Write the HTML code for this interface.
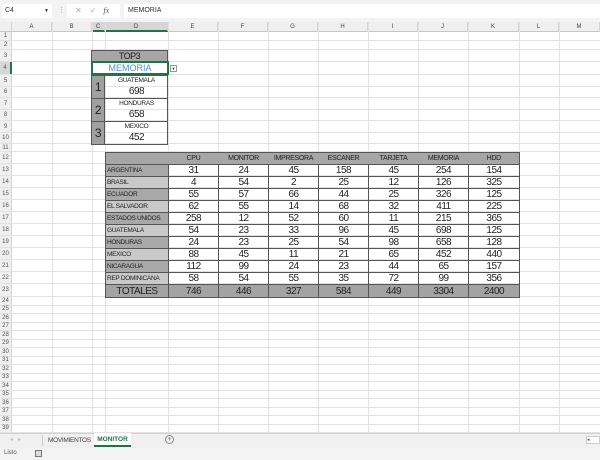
<!DOCTYPE html>
<html><head><meta charset="utf-8"><style>
*{margin:0;padding:0;box-sizing:border-box}
body{width:600px;height:460px;overflow:hidden;background:#fff;font-family:"Liberation Sans",Arial,sans-serif;position:relative}
.a{position:absolute}
.r{position:absolute;left:0;width:600px;border-bottom:1px solid #e2e2e2}
.r span{position:absolute;left:0;top:0;bottom:0;width:12px;background:#efefef;border-right:1px solid #d4d4d4;font-size:6px;color:#555;display:flex;align-items:center;justify-content:center}
.v{position:absolute;top:22px;height:411px;width:1px;background:#e2e2e2}
.ch{position:absolute;top:22px;height:10px;background:#efefef;border-right:1px solid #d4d4d4;border-bottom:1px solid #c6c6c6;font-size:6px;color:#444;text-align:center;line-height:10px}
.n{font-family:"Liberation Sans Narrow","Liberation Sans",sans-serif;letter-spacing:-0.5px}
table{border-collapse:collapse;position:absolute;table-layout:fixed}
td{padding:0;text-align:center;overflow:hidden;white-space:nowrap}
#dt td{height:12px;border:1px solid #555;font-size:10px;line-height:11px;font-family:"Liberation Sans Narrow","Liberation Sans",sans-serif;letter-spacing:-0.5px;color:#222}
#dt td.l{text-align:left;font-size:6.5px;padding-left:1px;color:#222;letter-spacing:-0.3px}
#dt tr.h td{background:#a6a6a6;font-size:7px;letter-spacing:-0.3px;border-left:none;border-right:none}
#dt td.d{background:#a8a8a8}
#dt td.e{background:#c9c9c9}
#dt tr.t td{background:#a3a3a3;font-size:10px}
</style></head><body>
<div class="a" style="left:0;top:0;width:600px;height:22px;background:#f3f3f3"></div>
<div class="a" style="left:2px;top:4px;width:50px;height:14px;background:#fff;font-size:7px;line-height:14px;padding-left:3px;color:#333">C4<span style="position:absolute;right:3px;font-size:5px">▼</span></div>
<div class="a" style="left:58px;top:6px;font-size:7px;color:#aaa">⋮</div>
<div class="a" style="left:67px;top:4px;width:53px;height:14px;background:#fff;font-size:8px;line-height:14px;color:#aaa"><span style="margin-left:8px">✕</span><span style="margin-left:8px">✓</span><i style="margin-left:7px;color:#555;font-family:'Liberation Serif',serif">fx</i></div>
<div class="a" style="left:124px;top:4px;width:476px;height:14px;background:#fff;font-size:7px;line-height:14px;padding-left:4px;color:#333">MEMORIA</div>
<div class="ch" style="left:0;width:12px"></div>
<div class="ch" style="left:12px;width:40px">A</div>
<div class="ch" style="left:52px;width:40px">B</div>
<div class="ch" style="left:92px;width:13px;background:#d6d6d6;border-bottom:2px solid #217346">C</div>
<div class="ch" style="left:105px;width:63px;background:#d6d6d6;border-bottom:2px solid #217346">D</div>
<div class="ch" style="left:168px;width:50px">E</div>
<div class="ch" style="left:218px;width:50px">F</div>
<div class="ch" style="left:268px;width:50px">G</div>
<div class="ch" style="left:318px;width:50px">H</div>
<div class="ch" style="left:368px;width:50px">I</div>
<div class="ch" style="left:418px;width:50px">J</div>
<div class="ch" style="left:468px;width:51px">K</div>
<div class="ch" style="left:519px;width:40px">L</div>
<div class="ch" style="left:559px;width:41px">M</div>
<div class="v" style="left:52px"></div><div class="v" style="left:92px"></div><div class="v" style="left:105px"></div><div class="v" style="left:168px"></div><div class="v" style="left:218px"></div><div class="v" style="left:268px"></div><div class="v" style="left:318px"></div><div class="v" style="left:368px"></div><div class="v" style="left:418px"></div><div class="v" style="left:468px"></div><div class="v" style="left:519px"></div><div class="v" style="left:559px"></div>
<div class="r" style="top:32px;height:9px"><span>1</span></div>
<div class="r" style="top:41px;height:9px"><span>2</span></div>
<div class="r" style="top:50px;height:12px"><span>3</span></div>
<div class="r" style="top:62px;height:13px"><span style="background:#d6d6d6;border-right:2px solid #217346">4</span></div>
<div class="r" style="top:75px;height:12px"><span>5</span></div>
<div class="r" style="top:87px;height:11px"><span>6</span></div>
<div class="r" style="top:98px;height:12px"><span>7</span></div>
<div class="r" style="top:110px;height:11px"><span>8</span></div>
<div class="r" style="top:121px;height:12px"><span>9</span></div>
<div class="r" style="top:133px;height:11px"><span>10</span></div>
<div class="r" style="top:144px;height:8px"><span>11</span></div>
<div class="r" style="top:152px;height:12px"><span>12</span></div>
<div class="r" style="top:164px;height:12px"><span>13</span></div>
<div class="r" style="top:176px;height:12px"><span>14</span></div>
<div class="r" style="top:188px;height:12px"><span>15</span></div>
<div class="r" style="top:200px;height:12px"><span>16</span></div>
<div class="r" style="top:212px;height:12px"><span>17</span></div>
<div class="r" style="top:224px;height:12px"><span>18</span></div>
<div class="r" style="top:236px;height:12px"><span>19</span></div>
<div class="r" style="top:248px;height:12px"><span>20</span></div>
<div class="r" style="top:260px;height:12px"><span>21</span></div>
<div class="r" style="top:272px;height:12px"><span>22</span></div>
<div class="r" style="top:284px;height:13px"><span>23</span></div>
<div class="r" style="top:297px;height:8.5px"><span>24</span></div>
<div class="r" style="top:305.5px;height:8.5px"><span>25</span></div>
<div class="r" style="top:314px;height:8.5px"><span>26</span></div>
<div class="r" style="top:322.5px;height:8.5px"><span>27</span></div>
<div class="r" style="top:331px;height:8.5px"><span>28</span></div>
<div class="r" style="top:339.5px;height:8.5px"><span>29</span></div>
<div class="r" style="top:348px;height:8.5px"><span>30</span></div>
<div class="r" style="top:356.5px;height:8.5px"><span>31</span></div>
<div class="r" style="top:365px;height:8.5px"><span>32</span></div>
<div class="r" style="top:373.5px;height:8.5px"><span>33</span></div>
<div class="r" style="top:382px;height:8.5px"><span>34</span></div>
<div class="r" style="top:390.5px;height:8.5px"><span>35</span></div>
<div class="r" style="top:399px;height:8.5px"><span>36</span></div>
<div class="r" style="top:407.5px;height:8.5px"><span>37</span></div>
<div class="r" style="top:416px;height:8.5px"><span>38</span></div>
<div class="r" style="top:424.5px;height:8.5px"><span>39</span></div>

<div class="a n" style="left:91px;top:50px;width:77px;height:12px;background:#a6a6a6;border:1px solid #555;font-size:9px;text-align:center;line-height:11px;color:#222">TOP3</div>
<div class="a" style="left:91px;top:61px;width:78px;height:14px;background:#fff;border:2px solid #217346;font-size:9px;text-align:center;line-height:10px;color:#4f8fcf">MEMORIA</div>
<div class="a" style="left:170px;top:65px;width:7px;height:7px;border:1px solid #999;background:#fff;font-size:4px;line-height:6px;text-align:center;color:#333">▼</div>
<div class="a" style="left:91px;top:75px;width:14px;height:70px;border:1px solid #555;background:#a0a0a0"></div>
<div class="a" style="left:91px;top:75px;width:77px;height:70px;border:1px solid #555"></div>
<div class="a" style="left:91px;top:98px;width:77px;height:1px;background:#555"></div>
<div class="a" style="left:91px;top:121px;width:77px;height:1px;background:#555"></div>
<div class="a" style="left:104px;top:75px;width:1px;height:70px;background:#555"></div>
<div class="a n" style="left:91px;top:80px;width:14px;font-size:12px;text-align:center;color:#222">1</div>
<div class="a n" style="left:91px;top:103px;width:14px;font-size:12px;text-align:center;color:#222">2</div>
<div class="a n" style="left:91px;top:126px;width:14px;font-size:12px;text-align:center;color:#222">3</div>
<div class="a" style="left:105px;top:77px;width:63px;font-size:6.5px;letter-spacing:-0.3px;text-align:center;color:#222">GUATEMALA</div>
<div class="a n" style="left:105px;top:86px;width:63px;font-size:10px;text-align:center;color:#222">698</div>
<div class="a" style="left:105px;top:100px;width:63px;font-size:6.5px;letter-spacing:-0.3px;text-align:center;color:#222">HONDURAS</div>
<div class="a n" style="left:105px;top:109px;width:63px;font-size:10px;text-align:center;color:#222">658</div>
<div class="a" style="left:105px;top:123px;width:63px;font-size:6.5px;letter-spacing:-0.3px;text-align:center;color:#222">MEXICO</div>
<div class="a n" style="left:105px;top:132px;width:63px;font-size:10px;text-align:center;color:#222">452</div>

<table id="dt" style="left:105px;top:152px;width:415px;border:1px solid #555">
<colgroup><col style="width:63px"><col style="width:50px"><col style="width:50px"><col style="width:50px"><col style="width:50px"><col style="width:50px"><col style="width:50px"><col style="width:51px"></colgroup>
<tr class="h"><td></td><td>CPU</td><td>MONITOR</td><td>IMPRESORA</td><td>ESCANER</td><td>TARJETA</td><td>MEMORIA</td><td>HDD</td></tr>
<tr><td class="l d">ARGENTINA</td><td>31</td><td>24</td><td>45</td><td>158</td><td>45</td><td>254</td><td>154</td></tr>
<tr><td class="l e">BRASIL</td><td>4</td><td>54</td><td>2</td><td>25</td><td>12</td><td>126</td><td>325</td></tr>
<tr><td class="l d">ECUADOR</td><td>55</td><td>57</td><td>66</td><td>44</td><td>25</td><td>326</td><td>125</td></tr>
<tr><td class="l e">EL SALVADOR</td><td>62</td><td>55</td><td>14</td><td>68</td><td>32</td><td>411</td><td>225</td></tr>
<tr><td class="l d">ESTADOS UNIDOS</td><td>258</td><td>12</td><td>52</td><td>60</td><td>11</td><td>215</td><td>365</td></tr>
<tr><td class="l e">GUATEMALA</td><td>54</td><td>23</td><td>33</td><td>96</td><td>45</td><td>698</td><td>125</td></tr>
<tr><td class="l d">HONDURAS</td><td>24</td><td>23</td><td>25</td><td>54</td><td>98</td><td>658</td><td>128</td></tr>
<tr><td class="l e">MEXICO</td><td>88</td><td>45</td><td>11</td><td>21</td><td>65</td><td>452</td><td>440</td></tr>
<tr><td class="l d">NICARAGUA</td><td>112</td><td>99</td><td>24</td><td>23</td><td>44</td><td>65</td><td>157</td></tr>
<tr><td class="l e">REP DOMINICANA</td><td>58</td><td>54</td><td>55</td><td>35</td><td>72</td><td>99</td><td>356</td></tr>
<tr class="t"><td style="height:13px">TOTALES</td><td>746</td><td>446</td><td>327</td><td>584</td><td>449</td><td>3304</td><td>2400</td></tr>
</table>

<div class="a" style="left:0;top:433px;width:600px;height:15px;background:#f0f0f0;border-top:1px solid #d0d0d0"></div>
<div class="a" style="left:10px;top:436px;font-size:6px;color:#bbb">◂ &nbsp; ▸</div>
<div class="a" style="left:42px;top:435px;width:1px;height:11px;background:#ccc"></div>
<div class="a" style="left:48px;top:434px;width:42px;height:13px;font-size:6.5px;letter-spacing:-0.3px;line-height:13px;text-align:center;color:#444">MOVIMIENTOS</div>
<div class="a" style="left:94px;top:433px;width:37px;height:14px;background:#fff;border-bottom:2px solid #217346;font-size:6.5px;line-height:13px;text-align:center;color:#217346;font-weight:bold">MONITOR</div>
<div class="a" style="left:165px;top:435px;width:9px;height:9px;border:1px solid #888;border-radius:50%;font-size:7px;line-height:7px;text-align:center;color:#666">+</div>
<div class="a" style="left:586px;top:436px;width:14px;height:8px;background:#fff;border:1px solid #ccc;font-size:5px;color:#555">◂</div>
<div class="a" style="left:0;top:448px;width:600px;height:12px;background:#f3f3f3"></div>
<div class="a" style="left:4px;top:450px;font-size:6px;color:#555">Listo</div>
<div class="a" style="left:35px;top:450px;width:7px;height:7px;border:1px solid #777;background:#ddd"></div>
</body></html>
